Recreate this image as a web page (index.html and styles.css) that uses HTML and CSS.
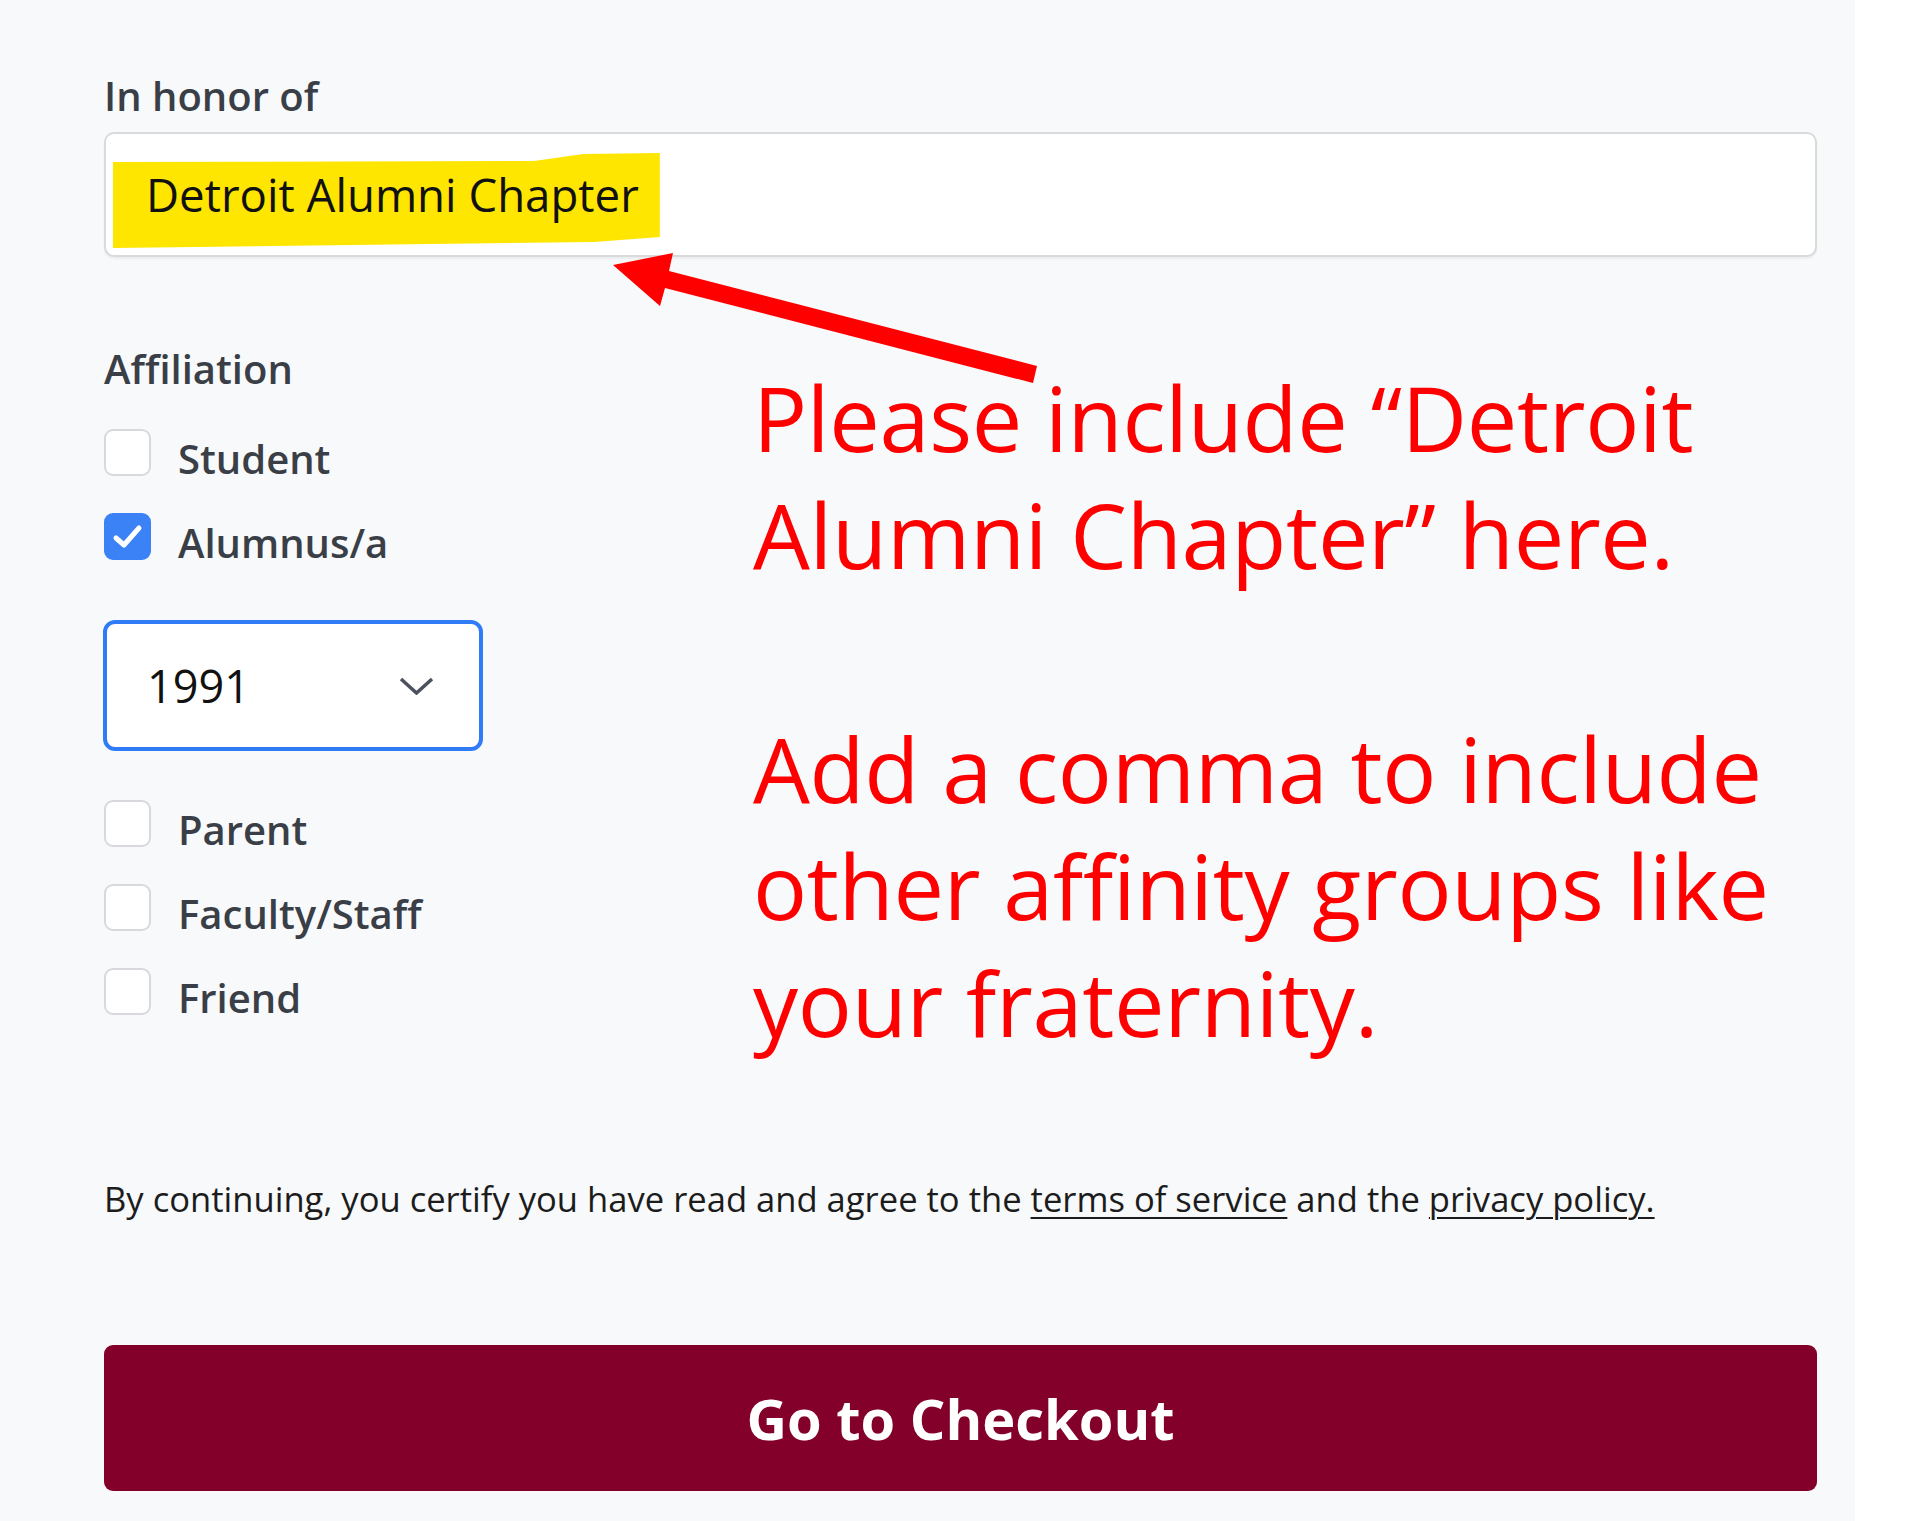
FILE: index.html
```html
<!DOCTYPE html>
<html lang="en">
<head>
<meta charset="UTF-8">
<meta name="viewport" content="width=device-width, initial-scale=1.0">
<title>Gift Details</title>
<link rel="stylesheet" href="styles.css">
</head>
<body>
  <div class="page">
    <label class="field-label">In honor of</label>
    <div class="text-input">
      <span class="marker">Detroit Alumni Chapter</span>
    </div>

    <div class="affiliation">
      <div class="choices">
        <p class="field-label">Affiliation</p>

        <div class="check-row first">
          <span class="box"></span>
          <span class="check-text">Student</span>
        </div>
        <div class="check-row">
          <span class="box checked">
            <svg width="47" height="47" viewBox="0 0 47 47"><polyline points="12,25 20,32 35,15" fill="none" stroke="#fff" stroke-width="5" stroke-linecap="round" stroke-linejoin="round"/></svg>
          </span>
          <span class="check-text">Alumnus/a</span>
        </div>

        <div class="year-select">
          <span>1991</span>
          <svg width="35" height="18" viewBox="0 0 35 18"><polyline points="2,2 17.5,16 33,2" fill="none" stroke="#4b5160" stroke-width="3.5"/></svg>
        </div>

        <div class="check-row after-select">
          <span class="box"></span>
          <span class="check-text">Parent</span>
        </div>
        <div class="check-row">
          <span class="box"></span>
          <span class="check-text">Faculty/Staff</span>
        </div>
        <div class="check-row">
          <span class="box"></span>
          <span class="check-text">Friend</span>
        </div>
      </div>

      <div class="note">
        <p>Please include “Detroit<br>Alumni Chapter” here.</p>
        <p class="gap">Add a comma to include<br>other affinity groups like<br>your fraternity.</p>
      </div>
    </div>

    <p class="terms">By continuing, you certify you have read and agree to the <a href="#">terms of service</a> and the <a href="#">privacy policy.</a></p>

    <button class="checkout">Go to Checkout</button>

    <!-- annotation arrow -->
    <svg class="arrow" width="1855" height="1521" viewBox="0 0 1855 1521">
      <polygon points="613,265 673,253 669,271 1037,366 1033,383 665,288 660,306" fill="#ff0000"/>
    </svg>
  </div>
</body>
</html>
```

FILE: styles.css
```css
body {
  margin: 0;
  background-color: #fff;
  font-family: 'Open Sans', 'Noto Sans', sans-serif;
}

.page {
  position: relative;
  width: 1855px;
  height: 1521px;
  box-sizing: border-box;
  padding: 72px 38px 0 104px;
  background-color: #f8f9fa;
}

.field-label {
  display: block;
  margin: 0;
  font-size: 40px;
  line-height: 48px;
  font-weight: 600;
  color: #3a3f47;
}

.text-input {
  margin-top: 12px;
  height: 125px;
  box-sizing: border-box;
  padding: 19px 0 0 7px;
  background-color: #fff;
  border: 2px solid #dadada;
  border-radius: 10px;
  box-shadow: 0 2px 2px rgba(0, 0, 0, 0.05);
}

/* highlighter stroke */
.marker {
  display: inline-block;
  height: 95px;
  padding: 0 21px 0 33px;
  font-size: 45.6px;
  line-height: 83px;
  color: #111;
  background-color: #ffe600;
  clip-path: polygon(0 9px, 77% 8px, 86% 1px, 100% 0, 100% 84px, 88% 89px, 0 95px);
}

.affiliation {
  display: flex;
  margin-top: 88px;
}

.choices {
  width: 649px;
}

.check-row {
  display: flex;
  align-items: flex-start;
  height: 47px;
  margin-top: 37px;
}

.check-row.first {
  margin-top: 36px;
}

.check-row.after-select {
  margin-top: 49px;
}

.box {
  width: 47px;
  height: 47px;
  box-sizing: border-box;
  flex-shrink: 0;
  background-color: #fff;
  border: 2px solid #d7d9dc;
  border-radius: 9px;
}

.box.checked {
  background-color: #3b82f6;
  border-color: #3b82f6;
}

.box svg {
  display: block;
  margin: -2px;
}

.check-text {
  margin-left: 27px;
  padding-top: 6px;
  font-size: 40px;
  line-height: 47px;
  font-weight: 600;
  color: #3a3f47;
}

.year-select {
  display: flex;
  align-items: center;
  justify-content: space-between;
  width: 380px;
  height: 131px;
  box-sizing: border-box;
  margin: 60px 0 0 -1px;
  padding: 0 45px 0 40px;
  background-color: #fff;
  border: 4px solid #2f7cf6;
  border-radius: 12px;
  font-size: 45px;
  color: #111;
}

.note {
  margin-top: 14px;
  font-size: 90px;
  line-height: 117px;
  letter-spacing: -0.3px;
  color: #ff0000;
}

.note p {
  margin: 0;
}

.note .gap {
  margin-top: 117px;
}

.terms {
  margin: 114px 0 0 0;
  font-size: 34.6px;
  line-height: 48px;
  color: #1c1c1c;
}

.terms a {
  color: #1c1c1c;
  text-decoration: underline;
  text-decoration-thickness: 2px;
  text-underline-offset: 5px;
}

.checkout {
  display: block;
  width: 100%;
  height: 146px;
  margin-top: 122px;
  border: none;
  border-radius: 9px;
  background-color: #82002a;
  color: #fff;
  font-family: 'Open Sans', 'Noto Sans', sans-serif;
  font-size: 56px;
  font-weight: 700;
  cursor: pointer;
}

.arrow {
  position: absolute;
  top: 0;
  left: 0;
  pointer-events: none;
}
```
